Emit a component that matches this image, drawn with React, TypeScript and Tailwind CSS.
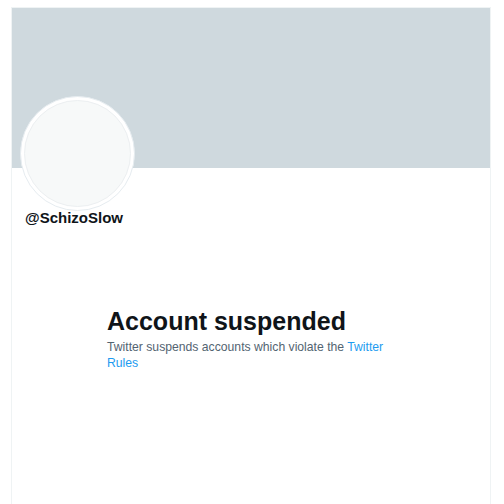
const App = () => {
  return (
    <div className="w-[504px] h-[504px] bg-white overflow-hidden pt-[7px] font-['Liberation_Sans',Arial,sans-serif]">
      <div className="ml-[11px] w-[480px] h-[497px] border-x border-t border-[#eff3f4]">
        <div className="h-[160px] bg-[#cfd9de]" />
        <div className="px-[8px]">
          <div className="-mt-[72px] w-[115px] h-[115px] rounded-full bg-white p-[3px] border border-[#e6ecf0]">
            <div className="w-full h-full rounded-full bg-[#f7f9f9] border border-[#eceff1]" />
          </div>
          <div className="-mt-[3px] ml-[5px] text-[15px] font-bold text-[#0f1419] leading-5">
            @SchizoSlow
          </div>
        </div>
        <div className="mt-[77px] mx-auto w-[288px]">
          <h1 className="text-[25px] font-bold text-[#0f1419] leading-8">Account suspended</h1>
          <p className="mt-[2px] text-[12.2px] leading-4 text-[#536471]">
            Twitter suspends accounts which violate the{" "}
            <span className="text-[#1d9bf0]">Twitter Rules</span>
          </p>
        </div>
      </div>
    </div>
  );
};

export default App;
